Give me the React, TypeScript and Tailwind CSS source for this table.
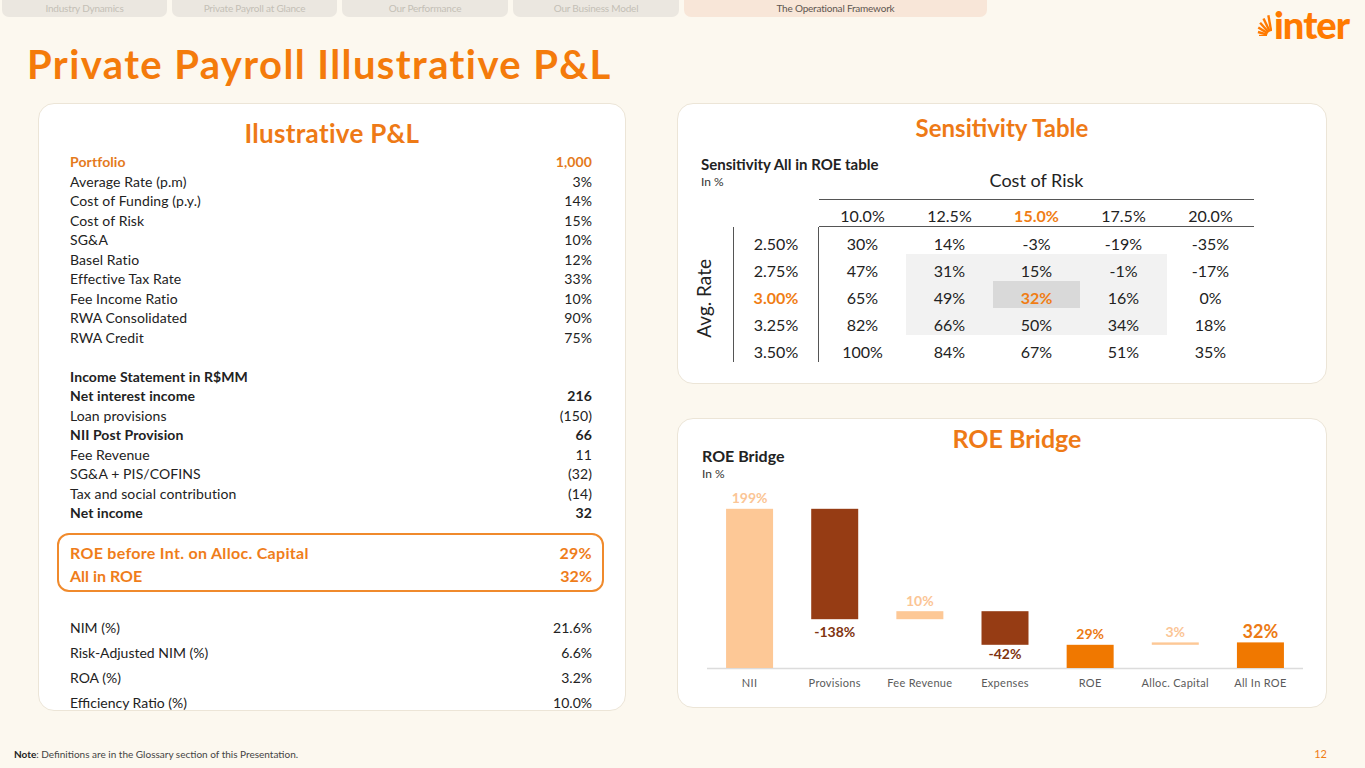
import React from 'react'

const font = { fontFamily: 'Lato, "Open Sans", sans-serif' }

const tabs = [
  { label: 'Industry Dynamics', cls: 'w-[165px]' },
  { label: 'Private Payroll at Glance', cls: 'w-[165px]' },
  { label: 'Our Performance', cls: 'w-[166px]' },
  { label: 'Our Business Model', cls: 'w-[166px]' },
  { label: 'The Operational Framework', cls: 'w-[303px]', active: true },
]

const assumptions = [
  ['Average Rate (p.m)', '3%'],
  ['Cost of Funding (p.y.)', '14%'],
  ['Cost of Risk', '15%'],
  ['SG&A', '10%'],
  ['Basel Ratio', '12%'],
  ['Effective Tax Rate', '33%'],
  ['Fee Income Ratio', '10%'],
  ['RWA Consolidated', '90%'],
  ['RWA Credit', '75%'],
]

const income: [string, string, boolean][] = [
  ['Net interest income', '216', true],
  ['Loan provisions', '(150)', false],
  ['NII Post Provision', '66', true],
  ['Fee Revenue', '11', false],
  ['SG&A + PIS/COFINS', '(32)', false],
  ['Tax and social contribution', '(14)', false],
  ['Net income', '32', true],
]

const ratios = [
  ['NIM (%)', '21.6%'],
  ['Risk-Adjusted NIM (%)', '6.6%'],
  ['ROA (%)', '3.2%'],
  ['Efficiency Ratio (%)', '10.0%'],
]

const costOfRisk = ['10.0%', '12.5%', '15.0%', '17.5%', '20.0%']
const avgRates = ['2.50%', '2.75%', '3.00%', '3.25%', '3.50%']
const grid = [
  ['30%', '14%', '-3%', '-19%', '-35%'],
  ['47%', '31%', '15%', '-1%', '-17%'],
  ['65%', '49%', '32%', '16%', '0%'],
  ['82%', '66%', '50%', '34%', '18%'],
  ['100%', '84%', '67%', '51%', '35%'],
]

function Logo() {
  const rays = [180, 164, 148, 132, 116, 100]
  return (
    <div className="flex items-end gap-[2px]">
      <svg width="17" height="22" viewBox="0 0 17 22" className="mb-[3px]">
        {rays.map((a, i) => {
          const r = (a * Math.PI) / 180
          const cx = 17
          const cy = 22
          const r1 = 5
          const r2 = 13 + i * 1.6
          return (
            <line
              key={a}
              x1={cx + Math.cos(r) * r1}
              y1={cy - Math.sin(r) * r1}
              x2={cx + Math.cos(r) * r2}
              y2={cy - Math.sin(r) * r2}
              stroke="#ff7a00"
              strokeWidth="2.4"
            />
          )
        })}
      </svg>
      <span className="text-[38px] font-black leading-[30px] tracking-[-1px] text-[#ff7a00]" style={font}>
        inter
      </span>
    </div>
  )
}

function Line({ label, value, cls = '' }: { label: string; value: string; cls?: string }) {
  return (
    <div className={`flex items-center justify-between ${cls}`}>
      <span>{label}</span>
      <span>{value}</span>
    </div>
  )
}

function PnlCard() {
  return (
    <section className="h-[608px] w-[588px] rounded-[16px] border border-[#ece5d7] bg-white text-[14px] text-[#222]">
      <h2 className="pt-[14px] text-center text-[26px] font-bold leading-[30px] tracking-[0.3px] text-[#ee7a16]">
        Ilustrative P&amp;L
      </h2>
      <div className="mt-[4px] pl-[31px] pr-[33px] tracking-[0.1px]">
        <Line label="Portfolio" value="1,000" cls="h-[19.5px] font-bold text-[#e47a1c]" />
        {assumptions.map(([l, v]) => (
          <Line key={l} label={l} value={v} cls="h-[19.5px]" />
        ))}
        <div className="h-[19.5px]" />
        <div className="flex h-[19.5px] items-center font-bold">Income Statement in R$MM</div>
        {income.map(([l, v, b]) => (
          <Line key={l} label={l} value={v} cls={b ? 'h-[19.5px] font-bold' : 'h-[19.5px]'} />
        ))}
      </div>
      <div className="ml-[18px] mr-[21px] mt-[10px] h-[59px] rounded-[12px] border-2 border-[#f08a2c] pl-[11px] pr-[10px] pt-[7px] text-[16px] font-bold text-[#ef7d1a]">
        <Line label="ROE before Int. on Alloc. Capital" value="29%" cls="h-[23px] tracking-[0.3px]" />
        <Line label="All in ROE" value="32%" cls="h-[23px]" />
      </div>
      <div className="mt-[23px] pl-[31px] pr-[33px]">
        {ratios.map(([l, v]) => (
          <Line key={l} label={l} value={v} cls="h-[25px]" />
        ))}
      </div>
    </section>
  )
}

function SensitivityCard() {
  return (
    <section className="h-[281px] w-[650px] rounded-[16px] border border-[#ece5d7] bg-white text-[#222]">
      <h2 className="pt-[11px] text-center text-[24px] font-bold leading-[26px] text-[#ee7a16]">Sensitivity Table</h2>
      <div className="ml-[12px] mt-[14px] grid grid-cols-[43px_86px_repeat(5,87px)] text-[16px]">
        <div className="col-span-2 h-[45px] whitespace-nowrap pl-[11px]">
          <div className="text-[15px] font-bold leading-[18px]">Sensitivity All in ROE table</div>
          <div className="mt-[2px] text-[12px] leading-[14px] text-[#333]">In %</div>
        </div>
        <div className="col-span-5 flex h-[45px] items-end justify-center border-b border-[#555] pb-[8px] text-[18px] leading-[22px]">
          Cost of Risk
        </div>
        <div className="col-span-2" />
        {costOfRisk.map((c, i) => (
          <div
            key={c}
            className={`flex h-[27px] items-center justify-center border-b border-[#555] pt-[5px] ${i === 2 ? 'font-bold text-[#f07d14]' : ''}`}
          >
            {c}
          </div>
        ))}
        <div className="row-span-5 flex items-center pl-[4px] pt-[8px]">
          <span className="rotate-180 text-[19px] leading-[20px] [writing-mode:vertical-rl]">Avg. Rate</span>
        </div>
        {avgRates.map((r, ri) => (
          <React.Fragment key={r}>
            <div
              className={`flex h-[27px] items-center justify-center border-l border-r border-[#555] pt-[6px] ${ri === 2 ? 'font-bold text-[#f07d14]' : ''}`}
            >
              {r}
            </div>
            {grid[ri].map((v, ci) => {
              const center = ri === 2 && ci === 2
              const shaded = ri >= 1 && ri <= 3 && ci >= 1 && ci <= 3
              return (
                <div
                  key={ci}
                  className={`flex h-[27px] items-center justify-center pt-[6px] ${
                    center ? 'bg-[#d9d9d9] font-bold text-[#f07d14]' : shaded ? 'bg-[#f2f2f2]' : ''
                  }`}
                >
                  {v}
                </div>
              )
            })}
          </React.Fragment>
        ))}
      </div>
    </section>
  )
}

const bars = [
  { name: 'NII', top: 21.8, bottom: 181, fill: '#fdc896', label: '199%', ly: 16, lc: '#fbc595', size: 14 },
  { name: 'Provisions', top: 21.8, bottom: 132.2, fill: '#963c14', label: '-138%', ly: 150, lc: '#7f3410', size: 14 },
  { name: 'Fee Revenue', top: 124.2, bottom: 132.2, fill: '#fdc896', label: '10%', ly: 119, lc: '#fbc595', size: 14 },
  { name: 'Expenses', top: 124.2, bottom: 157.8, fill: '#963c14', label: '-42%', ly: 172, lc: '#7f3410', size: 14 },
  { name: 'ROE', top: 157.8, bottom: 181, fill: '#f07800', label: '29%', ly: 152, lc: '#ec7a14', size: 14 },
  { name: 'Alloc. Capital', top: 155.4, bottom: 157.8, fill: '#fdc896', label: '3%', ly: 150, lc: '#fbc595', size: 14 },
  { name: 'All In ROE', top: 155.4, bottom: 181, fill: '#f07800', label: '32%', ly: 151, lc: '#ec7a14', size: 18 },
]

function BridgeCard() {
  const slot = 596 / 7
  return (
    <section className="h-[290px] w-[650px] rounded-[16px] border border-[#ece5d7] bg-white text-[#222]">
      <h2 className="pl-[30px] pt-[8px] text-center text-[25px] font-bold leading-[22px] text-[#ee7a16]">ROE Bridge</h2>
      <div className="pl-[24px]">
        <div className="text-[16px] font-bold leading-[14px]">ROE Bridge</div>
        <div className="mt-[4px] text-[12px] leading-[14px] text-[#333]">In %</div>
      </div>
      <svg width="596" height="212" className="ml-[29px] mt-[6px]" style={font}>
        <line x1="0" y1="181.5" x2="596" y2="181.5" stroke="#dcdcdc" strokeWidth="1.5" />
        {bars.map((b, i) => {
          const cx = i * slot + slot / 2
          return (
            <g key={b.name}>
              <rect x={cx - 23.5} y={b.top} width="47" height={b.bottom - b.top} fill={b.fill} />
              <text x={cx} y={b.ly} textAnchor="middle" fontSize={b.size} fontWeight="700" fill={b.lc}>
                {b.label}
              </text>
              <text x={cx} y="200" textAnchor="middle" fontSize="11" fill="#5a5a5a" letterSpacing="0.3">
                {b.name}
              </text>
            </g>
          )
        })}
      </svg>
    </section>
  )
}

export default function App() {
  return (
    <div className="relative h-[768px] w-[1365px] overflow-hidden bg-[#fcf8ef]" style={font}>
      <header className="flex justify-between">
        <div>
          <nav className="flex gap-[5px] pl-[2px]">
            {tabs.map((t) => (
              <div
                key={t.label}
                className={`h-[17px] rounded-b-[7px] text-center text-[10px] leading-[17px] tracking-[-0.2px] ${t.cls} ${
                  t.active ? 'bg-[#f8e6d8] text-[#5e5650]' : 'bg-[#ebe7e0] text-[#c4bfb6]'
                }`}
              >
                {t.label}
              </div>
            ))}
          </nav>
          <h1 className="ml-[27px] mt-[25px] text-[40px] font-bold leading-[44px] tracking-[1.4px] text-[#f47b0b]">
            Private Payroll Illustrative P&amp;L
          </h1>
        </div>
        <div className="pr-[16px] pt-[9px]">
          <Logo />
        </div>
      </header>

      <main className="mt-[17px] flex gap-[51px] pl-[38px]">
        <PnlCard />
        <div className="flex flex-col gap-[34px]">
          <SensitivityCard />
          <BridgeCard />
        </div>
      </main>

      <footer className="mt-[36px] flex items-center justify-between pl-[14px] pr-[38px]">
        <p className="text-[10px] leading-[14px] text-[#444]">
          <span className="font-bold text-[#222]">Note</span>: Definitions are in the Glossary section of this Presentation.
        </p>
        <span className="text-[11px] leading-[14px] text-[#f07d14]">12</span>
      </footer>
    </div>
  )
}
